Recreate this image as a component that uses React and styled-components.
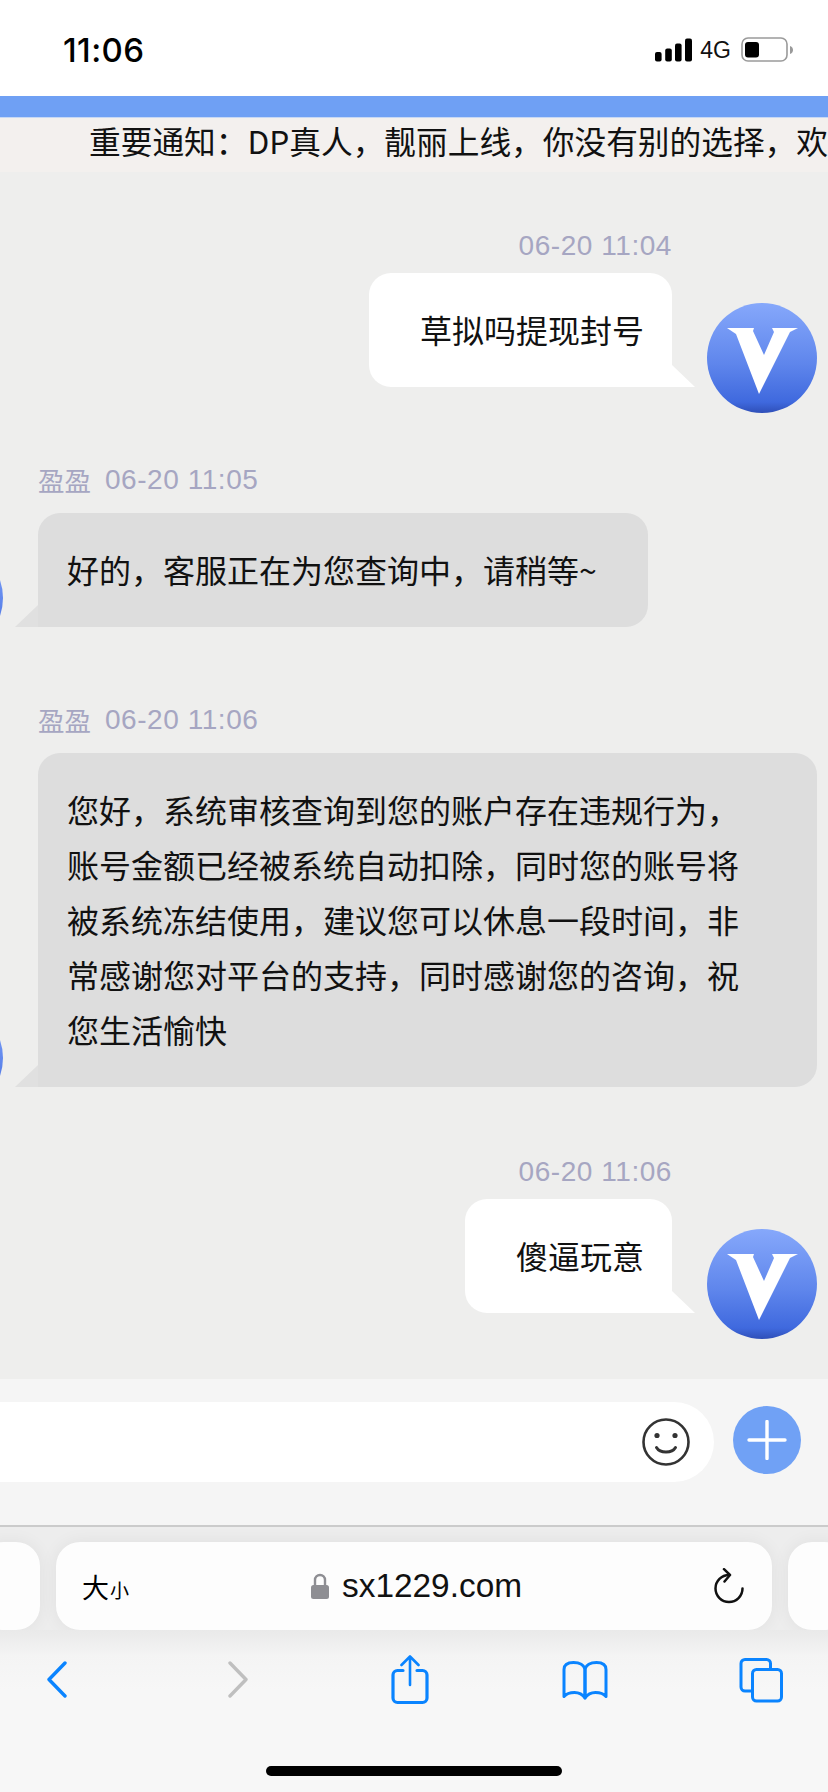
import React from "react";
import styled, { createGlobalStyle } from "styled-components";

const CJK = `"Noto Sans CJK SC", "Liberation Sans", sans-serif`;
const LATIN = `"Liberation Sans", "Noto Sans CJK SC", sans-serif`;

const GlobalStyle = createGlobalStyle`
  html, body {
    margin: 0;
    padding: 0;
    background: #fff;
  }
`;

const Phone = styled.div`
  width: 828px;
  height: 1792px;
  display: flex;
  flex-direction: column;
  overflow: hidden;
  font-family: ${CJK};
`;

const StatusBar = styled.div`
  height: 96px;
  flex: none;
  box-sizing: border-box;
  padding: 4px 33px 0 63px;
  display: flex;
  align-items: center;
  justify-content: space-between;
  background: #fff;
`;
const Clock = styled.div`
  font-family: Inter, ${LATIN};
  font-size: 33px;
  font-weight: 500;
  letter-spacing: 0.4px;
  color: #000;
`;
const StatusIcons = styled.div`
  display: flex;
  align-items: center;
  gap: 8px;
`;
const Network = styled.span`
  font-family: ${LATIN};
  font-size: 23px;
  color: #111;
  margin-right: 2px;
`;

const BlueBand = styled.div`
  height: 22px;
  flex: none;
  background: #6fa0f4;
  border-bottom: 1px solid #c6d8f5;
  box-sizing: border-box;
`;
const Notice = styled.div`
  height: 54px;
  flex: none;
  box-sizing: border-box;
  padding: 0 0 8px 89px;
  background: #f3f0ee;
  font-size: 31.7px;
  line-height: 44px;
  color: #111;
  white-space: nowrap;
  overflow: hidden;
`;

const Chat = styled.div`
  flex: 1;
  min-height: 0;
  box-sizing: border-box;
  padding-top: 58px;
  background: #eeeeed;
  display: flex;
  flex-direction: column;
  gap: 67px;
  overflow: hidden;
`;
const Message = styled.div`
  display: flex;
  flex-direction: column;
  margin-top: ${(p) => p.$top}px;
`;
const Meta = styled.div`
  height: 32px;
  display: flex;
  align-items: center;
  gap: 14px;
  justify-content: ${(p) => (p.$mine ? "flex-end" : "flex-start")};
  font-family: ${LATIN};
  font-size: 28px;
  letter-spacing: 0.55px;
  color: #a6a6c2;
  padding: ${(p) => (p.$mine ? "0 156px 0 0" : "0 0 0 38px")};
  margin-bottom: ${(p) => (p.$mine ? "11px" : "17px")};
`;
const MetaName = styled.span`
  font-family: ${CJK};
  font-size: 26.5px;
  line-height: 32px;
  letter-spacing: 0;
`;
const Row = styled.div`
  display: flex;
  align-items: flex-end;
  gap: 35px;
  flex-direction: ${(p) => (p.$mine ? "row-reverse" : "row")};
  padding-right: 11px;
`;
const Bubble = styled.div`
  position: relative;
  box-sizing: border-box;
  max-width: 779px;
  padding: ${(p) => (p.$mine ? "29px 28px 30px 51px" : "29px 51px 30px 29px")};
  background: ${(p) => (p.$mine ? "#fff" : "#dddddd")};
  border-radius: ${(p) => (p.$mine ? "22px 22px 0 22px" : "22px 22px 22px 0")};
  font-size: 32px;
  line-height: 55px;
  color: #111;

  &::after {
    content: "";
    position: absolute;
    bottom: 0;
    width: 0;
    height: 0;
    border-bottom: 22px solid ${(p) => (p.$mine ? "#fff" : "#e0e0e0")};
    ${(p) =>
      p.$mine
        ? "left: 100%; border-right: 23px solid transparent;"
        : "right: 100%; border-left: 23px solid transparent;"}
  }
`;
const AvatarBox = styled.div`
  flex: none;
  width: 110px;
  height: 110px;
  margin-bottom: -26px;
  margin-left: ${(p) => (p.$mine ? "0" : "-107px")};
`;

const InputArea = styled.div`
  height: 148px;
  flex: none;
  box-sizing: border-box;
  padding: 23px 27px 0 0;
  display: flex;
  align-items: flex-start;
  gap: 19px;
  background: #f5f5f5;
  border-bottom: 2px solid #cbcbcb;
`;
const InputPill = styled.div`
  flex: 1;
  height: 80px;
  margin-left: -40px;
  padding-right: 24px;
  display: flex;
  align-items: center;
  justify-content: flex-end;
  background: #fff;
  border-radius: 40px;
`;
const PlusButton = styled.div`
  width: 68px;
  height: 68px;
  margin-top: 4px;
  flex: none;
  border-radius: 50%;
  background: #70a1f5;
  display: flex;
  align-items: center;
  justify-content: center;
`;

const Tabs = styled.div`
  flex: none;
  height: 103px;
  box-sizing: border-box;
  padding-top: 15px;
  display: flex;
  gap: 16px;
  background: #ededed;
`;
const SideTab = styled.div`
  flex: none;
  width: 60px;
  height: 88px;
  margin: ${(p) => (p.$left ? "0 0 0 -20px" : "0 -20px 0 0")};
  background: #fdfdfd;
  border-radius: 24px;
  box-shadow: 0 0 18px rgba(0, 0, 0, 0.06);
`;
const AddressBar = styled.div`
  flex: none;
  width: 716px;
  height: 88px;
  box-sizing: border-box;
  padding: 0 28px 0 26px;
  display: grid;
  grid-template-columns: 1fr auto 1fr;
  align-items: center;
  background: #fdfdfd;
  border-radius: 24px;
  box-shadow: 0 0 18px rgba(0, 0, 0, 0.06);
`;
const TextSize = styled.div`
  display: flex;
  align-items: baseline;
  gap: 1px;
  font-size: 27px;
  font-weight: 400;
  color: #000;
`;
const TextSizeSmall = styled.span`
  font-size: 19px;
`;
const Domain = styled.div`
  margin-left: 7px;
  display: flex;
  align-items: center;
  gap: 13px;
  font-family: ${LATIN};
  font-size: 33.4px;
  color: #111;
`;
const ReloadSlot = styled.div`
  display: flex;
  justify-content: flex-end;
`;

const Toolbar = styled.div`
  flex: none;
  height: 162px;
  position: relative;
  box-sizing: border-box;
  padding-top: 25px;
  display: grid;
  grid-template-columns: 114px 247px 97px 253px 100px;
  grid-auto-rows: 50px;
  justify-items: center;
  background: linear-gradient(#e9e9e9 0, #f4f4f4 26px, #f7f7f7 60px);
`;
const HomeIndicator = styled.div`
  position: absolute;
  left: 266px;
  top: 136px;
  width: 296px;
  height: 10px;
  border-radius: 5px;
  background: #000;
`;

const Signal = () => (
  <svg width="37" height="24" viewBox="0 0 37 24">
    <rect x="0" y="14" width="6.6" height="9.5" rx="2" fill="#000" />
    <rect x="10.2" y="10.5" width="6.6" height="13" rx="2" fill="#000" />
    <rect x="20" y="5.5" width="6.6" height="18" rx="2" fill="#000" />
    <rect x="30" y="0.5" width="7" height="23" rx="2" fill="#000" />
  </svg>
);

const Battery = () => (
  <svg width="54" height="26" viewBox="0 0 54 26">
    <rect x="1" y="1" width="45" height="23" rx="6" fill="none" stroke="#9a9a9a" strokeWidth="1.6" />
    <rect x="4" y="5" width="14" height="15.5" rx="3" fill="#000" />
    <path d="M49 9 C51.5 10 52 11.5 52 13 C52 14.5 51.5 16 49 17 Z" fill="#9a9a9a" />
  </svg>
);

const VAvatar = () => (
  <svg width="110" height="110" viewBox="0 0 110 110">
    <defs>
      <linearGradient id="avatarFill" x1="0" y1="0" x2="0" y2="1">
        <stop offset="0" stopColor="#86a8fb" />
        <stop offset="0.55" stopColor="#5f86ec" />
        <stop offset="0.9" stopColor="#3f69de" />
        <stop offset="1" stopColor="#2f4fb8" />
      </linearGradient>
      <filter id="avatarSoft" x="-10%" y="-10%" width="120%" height="120%">
        <feGaussianBlur stdDeviation="0.7" />
      </filter>
    </defs>
    <circle cx="55" cy="55" r="55" fill="url(#avatarFill)" />
    <path
      d="M20 25 H47 L46 28 L57 52 L67 29 L65 25 H91 L83 29 L52 91 L29 31 Z"
      fill="#fff"
      filter="url(#avatarSoft)"
    />
  </svg>
);

const Smiley = () => (
  <svg width="48" height="48" viewBox="0 0 48 48" fill="none" stroke="#333" strokeLinecap="round">
    <circle cx="24" cy="24" r="22.5" strokeWidth="2.6" />
    <circle cx="15" cy="17.5" r="2.6" fill="#333" stroke="none" />
    <circle cx="33" cy="17.5" r="2.6" fill="#333" stroke="none" />
    <path d="M14.5 29.5 C18 35.5 30 35.5 33.5 29.5" strokeWidth="3" />
  </svg>
);

const Plus = () => (
  <svg width="40" height="40" viewBox="0 0 40 40" stroke="#fff" strokeWidth="3.4" strokeLinecap="round">
    <path d="M2 20 H38 M20 1.5 V38.5" />
  </svg>
);

const Lock = () => (
  <svg width="18" height="26" viewBox="0 0 18 26">
    <path d="M4 13 V7 a5 5 0 0 1 10 0 V13" fill="none" stroke="#8e8e93" strokeWidth="2.4" />
    <rect x="0" y="12" width="18" height="14" rx="2.5" fill="#8e8e93" />
  </svg>
);

const Reload = () => (
  <svg width="30" height="36" viewBox="0 0 30 36" fill="none" stroke="#111" strokeWidth="2.5" strokeLinecap="round" strokeLinejoin="round">
    <path d="M15 7 A13.5 13.5 0 1 0 28.5 20.5" />
    <path d="M10 1.2 L16 7 L10.5 13.5" />
  </svg>
);

const Chevron = ({ color, flip }) => (
  <svg width="20" height="50" viewBox="0 0 20 50" fill="none" stroke={color} strokeWidth="3.4" strokeLinecap="round" strokeLinejoin="round">
    <path d={flip ? "M2 8 L18 24.5 L2 41" : "M18 8 L2 24.5 L18 41"} />
  </svg>
);

const Share = () => (
  <svg width="38" height="50" viewBox="0 0 38 50" fill="none" stroke="#0a84ff" strokeWidth="3.2" strokeLinecap="round" strokeLinejoin="round">
    <path d="M12 15.5 H6.5 a4.5 4.5 0 0 0 -4.5 4.5 V43 a4.5 4.5 0 0 0 4.5 4.5 H31.5 a4.5 4.5 0 0 0 4.5 -4.5 V20 a4.5 4.5 0 0 0 -4.5 -4.5 H26" />
    <path d="M19 1.5 V30 M10.5 10 L19 1.5 L27.5 10" strokeWidth="2.6" />
  </svg>
);

const Book = () => (
  <svg width="46" height="50" viewBox="0 0 46 50" fill="none" stroke="#0a84ff" strokeWidth="3" strokeLinecap="round" strokeLinejoin="round">
    <path d="M23 14 V43 C20 38.5 17 37.5 12.5 37.5 C8 37.5 4.5 38.5 2 41.5 V14.5 C2 9.5 6 7.5 11.5 7.5 C17 7.5 21.5 9.5 23 14 Z" />
    <path d="M23 14 V43 C26 38.5 29 37.5 33.5 37.5 C38 37.5 41.5 38.5 44 41.5 V14.5 C44 9.5 40 7.5 34.5 7.5 C29 7.5 24.5 9.5 23 14 Z" />
  </svg>
);

const TabsIcon = () => (
  <svg width="44" height="50" viewBox="0 0 44 50" fill="none" stroke="#0a84ff" strokeWidth="3" strokeLinecap="round" strokeLinejoin="round">
    <path d="M12 36 H6 a4 4 0 0 1 -4 -4 V8.5 a4 4 0 0 1 4 -4 H27.5 a4 4 0 0 1 4 4 V14" />
    <rect x="13.5" y="14.5" width="29" height="31.5" rx="4" />
  </svg>
);

const messages = [
  { mine: true, top: 0, time: "06-20 11:04", text: "草拟吗提现封号" },
  { name: "盈盈", top: 10, time: "06-20 11:05", text: "好的，客服正在为您查询中，请稍等~" },
  {
    name: "盈盈",
    top: 10,
    time: "06-20 11:06",
    text: "您好，系统审核查询到您的账户存在违规行为，账号金额已经被系统自动扣除，同时您的账号将被系统冻结使用，建议您可以休息一段时间，非常感谢您对平台的支持，同时感谢您的咨询，祝您生活愉快",
  },
  { mine: true, top: 2, time: "06-20 11:06", text: "傻逼玩意" },
];

export default function App() {
  return (
    <Phone>
      <GlobalStyle />
      <StatusBar>
        <Clock>11:06</Clock>
        <StatusIcons>
          <Signal />
          <Network>4G</Network>
          <Battery />
        </StatusIcons>
      </StatusBar>
      <BlueBand />
      <Notice>重要通知：DP真人，靓丽上线，你没有别的选择，欢</Notice>
      <Chat>
        {messages.map((m, i) => (
          <Message key={i} $mine={m.mine} $top={m.top}>
            <Meta $mine={m.mine}>
              {m.name && <MetaName>{m.name}</MetaName>}
              {m.time}
            </Meta>
            <Row $mine={m.mine}>
              <AvatarBox $mine={m.mine}>
                <VAvatar />
              </AvatarBox>
              <Bubble $mine={m.mine}>{m.text}</Bubble>
            </Row>
          </Message>
        ))}
      </Chat>
      <InputArea>
        <InputPill>
          <Smiley />
        </InputPill>
        <PlusButton>
          <Plus />
        </PlusButton>
      </InputArea>
      <Tabs>
        <SideTab $left />
        <AddressBar>
          <TextSize>
            大<TextSizeSmall>小</TextSizeSmall>
          </TextSize>
          <Domain>
            <Lock />
            sx1229.com
          </Domain>
          <ReloadSlot>
            <Reload />
          </ReloadSlot>
        </AddressBar>
        <SideTab />
      </Tabs>
      <Toolbar>
        <Chevron color="#0a84ff" />
        <Chevron color="#bfbfbf" flip />
        <Share />
        <Book />
        <TabsIcon />
        <HomeIndicator />
      </Toolbar>
    </Phone>
  );
}
